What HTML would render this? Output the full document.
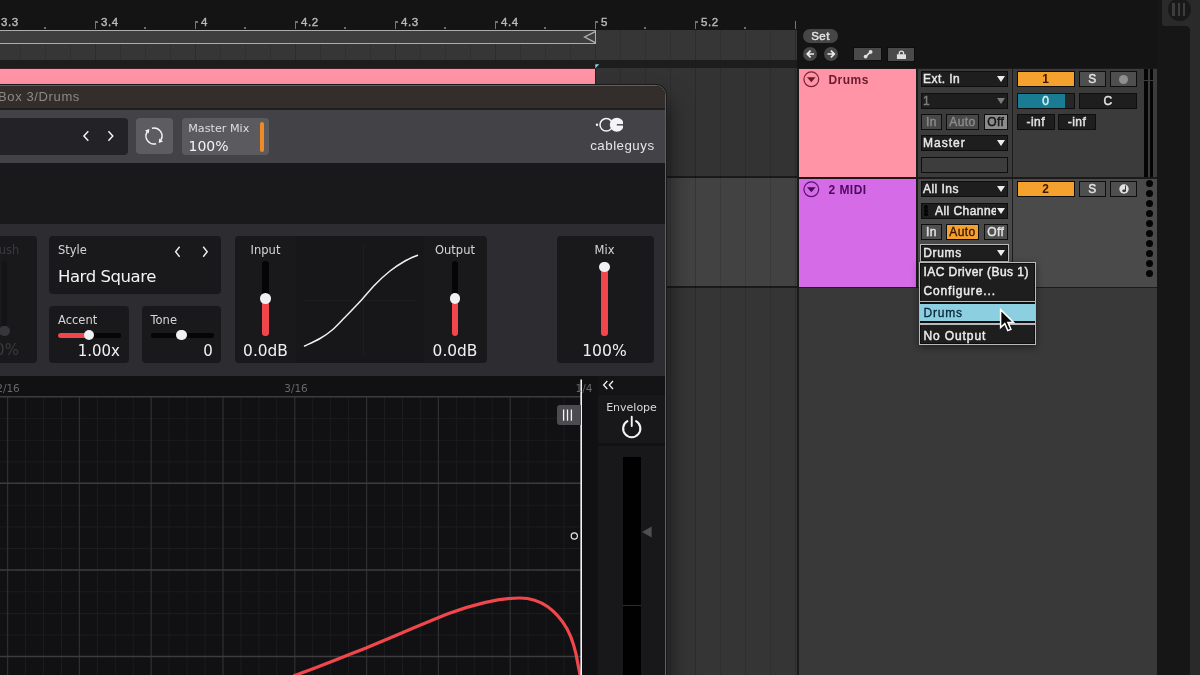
<!DOCTYPE html>
<html lang="en">
<head>
<meta charset="utf-8">
<title>Ableton Live – ShaperBox 3 routing</title>
<style>
*{box-sizing:border-box;margin:0;padding:0}
html,body{width:1200px;height:675px;overflow:hidden;background:#141414}
body{position:relative;font-family:"Liberation Sans",sans-serif;color:#e4e4e4}
#root{position:absolute;left:0;top:0;width:1200px;height:675px;overflow:hidden;will-change:transform}
.a{position:absolute}
.ab{font-family:"Liberation Sans",sans-serif;font-size:12px;-webkit-text-stroke:0.45px currentColor;white-space:nowrap;letter-spacing:.45px}
.pl{font-family:"DejaVu Sans","Liberation Sans",sans-serif;white-space:nowrap}
/* ---------- arrangement ---------- */
#grid{left:0;top:30px;width:797px;height:30px;background:#363636}
#lane1{left:0;top:68px;width:797px;height:108px;background:#333333}
#lane2{left:0;top:178px;width:797px;height:108px;background:#424242}
#lane3{left:0;top:288px;width:797px;height:387px;background:#353535}
.vl{position:absolute;top:0;bottom:0;width:1px;background:rgba(0,0,0,.11)}
.vb{background:rgba(0,0,0,.17)}
.rl{position:absolute;top:16.900px;font-size:11.5px;line-height:10px;color:#b9b9b9;-webkit-text-stroke:0.4px #b9b9b9;letter-spacing:.55px}
.tick{position:absolute;top:21.300px;width:1.400px;height:7.700px;background:#757575}
.tick:after{content:"";position:absolute;left:1px;top:0;width:2px;height:1.400px;background:#757575}
.nf:after{display:none}
.dot{position:absolute;top:27px;width:1.6px;height:1.6px;background:#8c8c8c;border-radius:1px}
#loop{left:-6px;top:30px;width:602px;height:14px;border:1.300px solid #adadad;background:#3e3e3e}
#clip{left:0;top:67.500px;width:594.500px;height:18.500px;background:#ff94a6;border-top:1px solid #4a1f27}
/* ---------- track area ---------- */
.thead{left:799px;width:117px;height:108px}
.io{left:918px;width:93.5px;height:108px}
.mx{left:1013px;width:144px;height:108px}
.p1{background:#3b3b3b}.p2{background:#4a4a4a}
.box{position:absolute;height:16.400px;background:#1e1e1e;border:1.300px solid #0e0e0e;line-height:14.600px;padding-left:1px;color:#e8e8e8;overflow:hidden}
.tri{position:absolute;right:2.5px;top:4px;width:0;height:0;border-left:4.3px solid transparent;border-right:4.3px solid transparent;border-top:6.5px solid #ececec}
.btn{position:absolute;height:16.400px;background:#4f4f4f;border:1.300px solid #0e0e0e;line-height:14.600px;text-align:center;color:#e2e2e2}
.fold{position:absolute;left:5px;top:4px;width:15.5px;height:15.5px;border-radius:50%;border:1.2px solid}
.fold:after{content:"";position:absolute;left:2.55px;top:4.3px;border-left:4px solid transparent;border-right:4px solid transparent;border-top:5.5px solid;border-top-color:inherit}
.tname{position:absolute;left:29.5px;top:3px;font-size:12px;font-weight:bold;line-height:16px;letter-spacing:.45px}
.or{background:#f5a12e;color:#3b1600;font-weight:bold;-webkit-text-stroke:0}
.pill{background:#464646;color:#e4e4e4;border-radius:8px;text-align:center}
.mbar{position:absolute;top:0;width:3.8px;background:#050505}
.mdot{position:absolute;left:1145.700px;width:7.400px;height:7.400px;border-radius:50%;background:#050505}
/* ---------- plugin ---------- */
#win{left:-20px;top:85px;width:685.5px;height:620px;border:1px solid #615e5d;border-radius:10px 10px 0 0;background:#111113;overflow:hidden;box-shadow:0 0 0 1px #1b1b1b,3px 16px 22px 1px rgba(0,0,0,.5)}
#win>*{position:absolute}
#win .w{position:absolute}
.pan{position:absolute;background:#19191c;border-radius:4px}
.lbl{position:absolute;font-size:11.5px;line-height:14px;color:#d6d6d8}
.val{position:absolute;font-size:15px;line-height:18px;color:#f0f0f2}
.trk{position:absolute;background:#050506;border-radius:3px}
.red{position:absolute;background:#f0464c;border-radius:3px}
.knob{position:absolute;width:10.600px;height:10.600px;margin:.2px;border-radius:50%;background:#f1f1f3}
</style>
</head>
<body>
<div id="root">
<!-- ================= ARRANGEMENT ================= -->
<div class="a" id="grid"></div>
<div class="a" style="left:0;top:60px;width:797px;height:8px;background:#1d1d1d"></div>
<div class="a" id="lane1"></div><div class="a" id="lane2"></div><div class="a" id="lane3"></div>
<div class="a" style="left:0;top:176px;width:797px;height:2px;background:#1a1a1a"></div>
<div class="a" style="left:0;top:286px;width:797px;height:2px;background:#1a1a1a"></div>
<div class="a" style="left:0;top:30px;width:797px;height:30px"><div class="vl" style="left:20px"></div><div class="vl" style="left:45px"></div><div class="vl" style="left:70px"></div><div class="vl vb" style="left:95px"></div><div class="vl" style="left:120px"></div><div class="vl" style="left:145px"></div><div class="vl" style="left:170px"></div><div class="vl vb" style="left:195px"></div><div class="vl" style="left:220px"></div><div class="vl" style="left:245px"></div><div class="vl" style="left:270px"></div><div class="vl vb" style="left:295px"></div><div class="vl" style="left:320px"></div><div class="vl" style="left:345px"></div><div class="vl" style="left:370px"></div><div class="vl vb" style="left:395px"></div><div class="vl" style="left:420px"></div><div class="vl" style="left:445px"></div><div class="vl" style="left:470px"></div><div class="vl vb" style="left:495px"></div><div class="vl" style="left:520px"></div><div class="vl" style="left:545px"></div><div class="vl" style="left:570px"></div><div class="vl vb" style="left:595px"></div><div class="vl" style="left:620px"></div><div class="vl" style="left:645px"></div><div class="vl" style="left:670px"></div><div class="vl vb" style="left:695px"></div><div class="vl" style="left:720px"></div><div class="vl" style="left:745px"></div><div class="vl" style="left:770px"></div><div class="vl vb" style="left:795px"></div></div><div class="a" style="left:0;top:68px;width:797px;height:607px"><div class="vl vb" style="left:595px"></div><div class="vl" style="left:620px"></div><div class="vl" style="left:645px"></div><div class="vl" style="left:670px"></div><div class="vl vb" style="left:695px"></div><div class="vl" style="left:720px"></div><div class="vl" style="left:745px"></div><div class="vl" style="left:770px"></div><div class="vl vb" style="left:795px"></div></div>
<div class="a" style="left:0;top:0;width:800px;height:30px"><div class="tick" style="left:-5.5px"></div><div class="rl" style="left:1px">3.3</div><div class="dot" style="left:44.3px"></div><div class="tick" style="left:94.5px"></div><div class="rl" style="left:101px">3.4</div><div class="dot" style="left:144.3px"></div><div class="tick" style="left:194.5px"></div><div class="rl" style="left:201px">4</div><div class="dot" style="left:244.3px"></div><div class="tick" style="left:294.5px"></div><div class="rl" style="left:301px">4.2</div><div class="dot" style="left:344.3px"></div><div class="tick" style="left:394.5px"></div><div class="rl" style="left:401px">4.3</div><div class="dot" style="left:444.3px"></div><div class="tick" style="left:494.5px"></div><div class="rl" style="left:501px">4.4</div><div class="dot" style="left:544.3px"></div><div class="tick" style="left:594.5px"></div><div class="rl" style="left:601px">5</div><div class="dot" style="left:644.3px"></div><div class="tick" style="left:694.5px"></div><div class="rl" style="left:701px">5.2</div><div class="dot" style="left:744.3px"></div><div class="tick nf" style="left:794.5px"></div></div>
<div class="a" id="loop"></div>
<svg class="a" style="left:580px;top:30px" width="18" height="15" viewBox="0 0 18 15"><path d="M15.3 1.6 L4.6 7 L15.3 12.6" fill="none" stroke="#b2b2b2" stroke-width="1.3"/></svg>
<div class="a" id="clip"></div>
<div class="a" style="left:595px;top:60px;width:1px;height:26px;background:#222"></div>
<svg class="a" style="left:594.500px;top:63.500px" width="6" height="6" viewBox="0 0 6 6"><path d="M0.300 0.300 L4.300 0.300 L0.300 4.300 Z" fill="#86d2dc"/></svg>

<!-- ================= TRACK AREA (right) ================= -->
<div class="a" style="left:797px;top:68px;width:2px;height:607px;background:#1a1a1a"></div>
<div class="a" style="left:799px;top:288px;width:358px;height:387px;background:#393939"></div>
<div class="a" style="left:799px;top:68px;width:358px;height:220px;background:#1b1b1b"></div>
<div class="a" style="left:1157px;top:0;width:33px;height:675px;background:#161616"></div>
<div class="a" style="left:1190px;top:0;width:10px;height:675px;background:#2a2a2a"></div>
<div class="a" style="left:1162px;top:0;width:38px;height:26px;background:#2a2a2a;border-bottom-left-radius:3px"></div>
<div class="a" style="left:1186px;top:26px;width:4px;height:4px;background:radial-gradient(circle at 0 100%,#161616 3.6px,#2a2a2a 4.2px)"></div>
<div class="a" style="left:1167.5px;top:-2.5px;width:23px;height:23px;border-radius:50%;background:#191919"></div>
<div class="a" style="left:1172.3px;top:2.5px;width:2.3px;height:13.5px;background:#3d3d3d"></div>
<div class="a" style="left:1177.7px;top:2.5px;width:2.3px;height:13.5px;background:#3d3d3d"></div>
<div class="a" style="left:1183.1px;top:2.5px;width:2.3px;height:13.5px;background:#3d3d3d"></div>

<!-- Set / locator buttons -->
<div class="a ab pill" style="left:803px;top:28.5px;width:35px;height:14px;line-height:14px;font-size:11.5px">Set</div>
<div class="a pill" style="left:803px;top:47px;width:14px;height:14px;border-radius:50%"></div>
<div class="a pill" style="left:824px;top:47px;width:14px;height:14px;border-radius:50%"></div>
<svg class="a" style="left:803px;top:47px" width="36" height="14" viewBox="0 0 36 14"><g fill="none" stroke="#ececec" stroke-width="1.7" stroke-linecap="butt"><path d="M11 7H4.2M7.6 3.6L4.2 7l3.4 3.4"/><path d="M24.5 7h6.8M27.9 3.6L31.3 7l-3.4 3.4"/></g></svg>
<div class="a btn" style="left:853px;top:46.700px;width:28.500px;height:14.500px;background:#4a4a4a"></div>
<div class="a btn" style="left:887px;top:47px;width:28px;height:14.5px;background:#4a4a4a"></div>
<svg class="a" style="left:853.5px;top:47px" width="62" height="15" viewBox="0 0 62 15"><g fill="#e0e0e0"><circle cx="11.6" cy="9.6" r="1.9"/><circle cx="16.6" cy="4.9" r="1.9"/><path d="M11 9l5-4.8 1.2 1.2-5 4.8z"/><rect x="42.900" y="7.300" width="9.100" height="4.700" rx=".5"/><path d="M44.700 7.600V6.300a2.750 2.750 0 0 1 5.500 0v1.300h-1.300V6.300a1.450 1.450 0 0 0-2.900 0v1.300z"/></g></svg>

<!-- Track 1 : Drums -->
<div class="a thead" style="top:68.500px;background:#ff94a6;color:#6a1a2e;height:108px"><svg class="a" style="left:4px;top:2.800px" width="17" height="17" viewBox="0 0 17 17"><circle cx="8.300" cy="8.300" r="7.400" fill="none" stroke="#7a2036" stroke-width="1.2"/><path d="M4 6.300H12.600L8.300 11.200z" fill="#6a1a2e"/></svg><div class="tname">Drums</div></div>
<div class="a io p1" style="top:68.5px;height:108px"></div>
<div class="a mx p1" style="top:68.5px;height:108px"></div>
<div class="a ab" style="left:0;top:0">
 <div class="box" style="left:921px;top:71px;width:87px">Ext. In<i class="tri"></i></div>
 <div class="box" style="left:921px;top:92.5px;width:87px;color:#7c7c7c">1<i class="tri" style="border-top-color:#7c7c7c"></i></div>
 <div class="btn" style="left:921px;top:114px;width:21px;color:#8a8a8a;background:#484848">In</div>
 <div class="btn" style="left:946px;top:114px;width:33px;color:#8a8a8a;background:#484848">Auto</div>
 <div class="btn" style="left:983.5px;top:114px;width:24.5px;color:#151515;background:#8b8b8b">Off</div>
 <div class="box" style="left:921px;top:135px;width:87px;letter-spacing:1px">Master<i class="tri"></i></div>
 <div class="box" style="left:921px;top:156.5px;width:87px;background:#3d3d3d"></div>
 <div class="btn or" style="left:1017px;top:71px;width:57.5px">1</div>
 <div class="btn" style="left:1079px;top:71px;width:27px">S</div>
 <div class="btn" style="left:1110.300px;top:71px;width:26.600px"><i style="position:absolute;left:8px;top:2.5px;width:9px;height:9px;border-radius:50%;background:#8f8f8f"></i></div>
 <div class="btn" style="left:1017px;top:92.5px;width:57.5px;background:linear-gradient(90deg,#1a7c93 0,#1a7c93 47.5px,#262626 47.5px);color:#d4f2f8">0</div>
 <div class="btn" style="left:1079px;top:92.5px;width:57.900px;background:#1e1e1e">C</div>
 <div class="btn" style="left:1017px;top:114px;width:37.5px;background:#1e1e1e">-inf</div>
 <div class="btn" style="left:1058px;top:114px;width:38px;background:#1e1e1e">-inf</div>
</div>
<div class="a" style="left:1144.4px;top:69px;width:10px;height:107.5px"><i class="mbar" style="left:0;height:10.5px"></i><i class="mbar" style="left:5.2px;height:10.5px"></i><i class="mbar" style="left:0;top:12px;height:95.5px"></i><i class="mbar" style="left:5.2px;top:12px;height:95.5px"></i></div>

<!-- Track 2 : 2 MIDI -->
<div class="a thead" style="top:178.5px;background:#d56be6;color:#4b0a5c;height:108px"><svg class="a" style="left:4px;top:2.800px" width="17" height="17" viewBox="0 0 17 17"><circle cx="8.300" cy="8.300" r="7.400" fill="none" stroke="#5a1270" stroke-width="1.2"/><path d="M4 6.300H12.600L8.300 11.200z" fill="#4b0a5c"/></svg><div class="tname">2 MIDI</div></div>
<div class="a io p2" style="top:178.5px;height:108px"></div>
<div class="a mx p2" style="top:178.5px;height:108px"></div>
<div class="a ab" style="left:0;top:110px">
 <div class="box" style="left:921px;top:71px;width:87px">All Ins<i class="tri"></i></div>
 <div class="box" style="left:921px;top:92.5px;width:87px;padding-left:0"><i style="position:absolute;left:2px;top:1.5px;width:4px;height:11px;background:radial-gradient(circle at 2px 2px,#050505 1.9px,transparent 2.2px) 0 0/4px 3.6px"></i><span style="position:absolute;left:0;top:0;width:73.600px;height:14px;overflow:hidden;padding-left:13px">All Channels</span><i class="tri"></i></div>
 <div class="btn" style="left:921px;top:114px;width:21px">In</div>
 <div class="btn or" style="left:946px;top:114px;width:33px;font-weight:normal;-webkit-text-stroke:0.35px #3b1600">Auto</div>
 <div class="btn" style="left:983.5px;top:114px;width:24.5px">Off</div>
 <div class="box" style="left:919.5px;top:134px;width:89.400px;height:18px;border:1.5px solid #b8b8b8;line-height:17.400px;letter-spacing:.7px;padding-left:2.700px;outline:1px solid #121212;outline-offset:-2.5px">Drums<i class="tri" style="top:4.5px;right:3px"></i></div>
 <div class="btn or" style="left:1017px;top:71px;width:57.5px">2</div>
 <div class="btn" style="left:1079px;top:71px;width:27px">S</div>
 <div class="btn" style="left:1110.300px;top:71px;width:26.600px"><svg style="position:absolute;left:7.300px;top:1.700px" width="10" height="10" viewBox="0 0 10 10"><circle cx="5" cy="5" r="4.700" fill="#e2e2e2"/><rect x="6" y="1.500" width="1" height="5.600" fill="#3a3a3a"/><ellipse cx="5.100" cy="6.800" rx="1.900" ry="1.400" fill="#3a3a3a"/></svg></div>
</div>
<i class="mdot" style="top:179.50px"></i><i class="mdot" style="top:189.56px"></i><i class="mdot" style="top:199.61px"></i><i class="mdot" style="top:209.66px"></i><i class="mdot" style="top:219.72px"></i><i class="mdot" style="top:229.78px"></i><i class="mdot" style="top:239.83px"></i><i class="mdot" style="top:249.88px"></i><i class="mdot" style="top:259.94px"></i><i class="mdot" style="top:270.00px"></i>

<!-- ================= PLUGIN WINDOW (ShaperBox 3) ================= -->
<div class="a pl" id="win">
 <!-- coordinates inside #win: x = page x + 19, y = page y - 86 -->
 <div style="left:0;top:0;width:100%;height:22px;background:#332e2c"></div>
 <div style="left:17px;top:3px;font-family:'Liberation Sans',sans-serif;font-size:13px;line-height:16px;color:#8d8986;letter-spacing:.62px">Box 3/Drums</div>
 <div style="left:0;top:22px;width:100%;height:2px;background:#1f1f20"></div>
 <div style="left:0;top:23.7px;width:100%;height:53.5px;background:#434347"></div>
 <!-- header controls -->
 <div style="left:0;top:31.5px;width:147px;height:37px;background:#232327;border-radius:4px"></div>
 <svg style="left:100px;top:43px" width="36" height="14" viewBox="0 0 36 14"><g fill="none" stroke="#f2f2f2" stroke-width="1.5"><path d="M7.3 2.3L2.9 7l4.4 4.7"/><path d="M27.4 2.3L31.8 7l-4.4 4.7"/></g></svg>
 <div style="left:154.800px;top:31.800px;width:37px;height:36.700px;background:#5c5c61;border-radius:4px"></div>
 <svg style="left:162.300px;top:39px" width="22" height="22" viewBox="0 0 22 22"><g fill="none" stroke="#f4f4f4" stroke-width="1.5"><path d="M8.930 3.270A8 8 0 0 1 17.930 15"/><path d="M13.070 18.730A8 8 0 0 1 4.070 7"/></g><path d="M15.700 17.900L20 16.400L16.200 13.400z M6.300 4.100L2 5.600L5.800 8.600z" fill="#f4f4f4"/></svg>
 <div style="left:200.5px;top:31.5px;width:87.5px;height:37px;background:#5b5b5f;border-radius:4px"></div>
 <div style="left:207.200px;top:35.500px;font-size:11.200px;line-height:14px;color:#dedee0">Master Mix</div>
 <div style="left:207.500px;top:50.500px;font-size:14px;line-height:18px;color:#f4f4f4">100%</div>
 <div style="left:279px;top:36px;width:4px;height:29.5px;background:#f08a24;border-radius:2px"></div>
 <!-- cableguys logo -->
 <svg style="left:612px;top:29px" width="30" height="20" viewBox="0 0 30 20"><circle cx="4" cy="9.8" r="1.25" fill="#f3f3f8"/><circle cx="13.3" cy="9.8" r="6.300" fill="none" stroke="#f3f3f8" stroke-width="1.500"/><circle cx="23.8" cy="9.8" r="7" fill="#f3f3f8"/><rect x="23.8" y="9.1" width="7.4" height="1.4" fill="#434347"/></svg>
 <div style="left:609.200px;top:51.700px;font-family:'Liberation Sans',sans-serif;font-size:13.300px;line-height:16px;color:#e6e6ea;letter-spacing:.5px">cableguys</div>
 <!-- dark band -->
 <div style="left:0;top:77.2px;width:100%;height:61px;background:#19191c"></div>
 <!-- control strip -->
 <div style="left:0;top:138px;width:100%;height:152px;background:#2d2d31"></div>
 <div class="pan" style="left:0;top:150.3px;width:55.8px;height:127px"></div>
 <div class="lbl" style="left:11px;top:156.7px;color:#3a3a3e">Push</div>
 <div class="trk" style="left:21px;top:175px;width:5px;height:74px;background:#141416"></div>
 <div class="knob" style="left:18.200px;top:239.500px;background:#37373b"></div>
 <div class="val" style="left:-5px;top:255.2px;color:#3a3a3e">100%</div>
 <!-- Style -->
 <div class="pan" style="left:67.900px;top:150.400px;width:172.600px;height:57.700px"></div>
 <div class="lbl" style="left:77px;top:156.7px">Style</div>
 <svg style="left:189.500px;top:159.300px" width="40" height="14" viewBox="0 0 40 14"><g fill="none" stroke="#f2f2f2" stroke-width="1.4"><path d="M8.6 1.8L4.6 6.8l4 5"/><path d="M31.6 1.8l4 5-4 5" transform="translate(.6 0)"/></g></svg>
 <div style="left:77px;top:179.800px;font-size:16.500px;line-height:22px;letter-spacing:-.45px;color:#f3f3f5">Hard Square</div>
 <!-- Accent -->
 <div class="pan" style="left:67.900px;top:220.400px;width:80.100px;height:57px"></div>
 <div class="lbl" style="left:77px;top:226.7px">Accent</div>
 <div class="trk" style="left:77px;top:246.5px;width:63px;height:5px"></div>
 <div class="red" style="left:77px;top:246.5px;width:30px;height:5px"></div>
 <div class="knob" style="left:102.5px;top:243.5px"></div>
 <div class="val" style="left:68.5px;top:255.7px;width:70.5px;text-align:right">1.00x</div>
 <!-- Tone -->
 <div class="pan" style="left:160.8px;top:220.3px;width:79.7px;height:57px"></div>
 <div class="lbl" style="left:169.5px;top:226.7px">Tone</div>
 <div class="trk" style="left:169.5px;top:246.5px;width:63px;height:5px"></div>
 <div class="knob" style="left:195px;top:243.5px"></div>
 <div class="val" style="left:160.8px;top:255.7px;width:71px;text-align:right">0</div>
 <!-- Input / curve / Output -->
 <div class="pan" style="left:253.5px;top:150.3px;width:252px;height:127px"></div>
 <div style="left:315px;top:150.3px;width:128px;height:127px;background:#171719"></div>
 <div style="left:381.500px;top:158px;width:1px;height:112px;background:#1e1e21"></div>
 <div style="left:322px;top:213.5px;width:114px;height:1px;background:#1e1e21"></div>
 <svg style="left:315px;top:150.3px" width="128" height="127" viewBox="0 0 128 127"><path d="M8.50 110.00C11.08 108.75 19.33 105.22 24.00 102.50C28.67 99.78 32.33 97.25 36.50 93.70C40.67 90.15 44.21 86.12 49.00 81.20C53.79 76.28 60.25 69.62 65.25 64.20C70.25 58.78 74.21 53.57 79.00 48.70C83.79 43.83 89.00 38.95 94.00 35.00C99.00 31.05 104.42 27.63 109.00 25.00C113.58 22.37 119.42 20.17 121.50 19.20" fill="none" stroke="#f0f0f2" stroke-width="1.5" stroke-linecap="round"/></svg>
 <div class="lbl" style="left:254.500px;top:156.7px;width:60px;text-align:center">Input</div>
 <div class="trk" style="left:281.400px;top:175px;width:6.200px;height:75px"></div>
 <div class="red" style="left:281.400px;top:213px;width:6.200px;height:37px"></div>
 <div class="knob" style="left:279px;top:207.3px"></div>
 <div class="val" style="left:254.500px;top:255.7px;width:60px;text-align:center;font-size:15.400px">0.0dB</div>
 <div class="lbl" style="left:439px;top:156.7px;width:70px;text-align:center">Output</div>
 <div class="trk" style="left:470.900px;top:175px;width:6.200px;height:75px"></div>
 <div class="red" style="left:470.900px;top:213px;width:6.200px;height:37px"></div>
 <div class="knob" style="left:468.5px;top:207.3px"></div>
 <div class="val" style="left:444px;top:255.7px;width:60px;text-align:center;font-size:15.400px">0.0dB</div>
 <!-- Mix -->
 <div class="pan" style="left:575.800px;top:150.3px;width:96.800px;height:127px"></div>
 <div class="lbl" style="left:593.500px;top:156.7px;width:60px;text-align:center">Mix</div>
 <div class="red" style="left:620px;top:181px;width:7px;height:69px"></div>
 <div class="knob" style="left:618px;top:175.5px"></div>
 <div class="val" style="left:593.500px;top:255.7px;width:60px;text-align:center;font-size:15.600px">100%</div>
 <svg style="left:19px;top:0" width="600" height="589" viewBox="0 86 600 589">
 <rect x="0" y="376" width="600" height="300" fill="#111113"/>
 <path d="M25.5 397V675M43.5 397V675M61.5 397V675M97.4 397V675M115.3 397V675M133.2 397V675M169.1 397V675M187.1 397V675M205.0 397V675M240.9 397V675M258.9 397V675M276.8 397V675M312.7 397V675M330.7 397V675M348.6 397V675M384.5 397V675M402.5 397V675M420.4 397V675M456.3 397V675M474.3 397V675M492.2 397V675M528.1 397V675M546.1 397V675M564.0 397V675M0 418.6H581M0 440.3H581M0 461.9H581M0 505.2H581M0 526.9H581M0 548.5H581M0 591.8H581M0 613.5H581M0 635.1H581" stroke="#1c1c1e" stroke-width="1" fill="none"/>
 <path d="M7.6 397V675M79.4 397V675M151.2 397V675M223.0 397V675M294.8 397V675M366.6 397V675M438.4 397V675M510.2 397V675" stroke="#2e2e30" stroke-width="1.3" fill="none"/>
 <path d="M0 396.7H581M0 483.3H581M0 569.9H581M0 656.5H581" stroke="#3c3c3e" stroke-width="1.5" fill="none"/>
 <path d="M294.5 675.5C316 668 340 658 366 648C394 636.500 420 625 448.700 613.600C462 608.500 472 605.500 484.500 602.600C496 600 508 598 520 598C532 598 541 602 547.800 606.800C555 612 562 620 567 628.800C572 638 576 652 578 664.500C578.800 669 579.600 672 580.200 676" stroke="#f0474d" stroke-width="3.2" fill="none" stroke-linecap="round"/>
 <path d="M581.200 379.5V676" stroke="#f4f4f4" stroke-width="1.6"/>
 <path d="M560 405H581V425H560a3 3 0 0 1-3-3V408a3 3 0 0 1 3-3z" fill="#4c4c50"/>
 <path d="M563.600 409.500V420.800M567.500 409.500V420.800M571.400 409.500V420.800" stroke="#f4f4f4" stroke-width="1.3"/>
 <circle cx="574.300" cy="536" r="3.1" fill="#111113" stroke="#e8e8e8" stroke-width="1.2"/>
 </svg>
 <div style="left:12px;top:296.300px;width:30px;text-align:center;font-size:10.5px;line-height:12px;color:#67676b">2/16</div>
 <div style="left:300px;top:296.300px;width:30px;text-align:center;font-size:10.5px;line-height:12px;color:#67676b">3/16</div>
 <div style="left:588px;top:296.300px;width:30px;text-align:center;font-size:10.5px;line-height:12px;color:#67676b">1/4</div>
 <div style="left:617px;top:290px;width:66.5px;height:18px;background:#141416"></div>
 <svg style="left:621px;top:294px" width="14" height="10" viewBox="0 0 14 10"><path d="M5.300 1L1.600 5l3.700 4M11 1L7.300 5l3.700 4" fill="none" stroke="#f0f0f0" stroke-width="1.3"/></svg>
 <div style="left:617px;top:308.500px;width:66.5px;height:48.5px;background:#18181a"></div>
 <div style="left:617px;top:314.5px;width:67px;text-align:center;font-size:11px;line-height:13px;color:#d8d8da">Envelope</div>
 <svg style="left:639px;top:329px" width="24" height="24" viewBox="0 0 24 24"><path d="M7.400 6.200A8.600 8.600 0 1 0 16.100 6.200" fill="none" stroke="#f4f4f4" stroke-width="2.1" stroke-linecap="round"/><path d="M11.750 1.800V11" stroke="#f4f4f4" stroke-width="1.9" stroke-linecap="round"/></svg>
 <div style="left:617px;top:360px;width:66.5px;height:240px;background:#18181a"></div>
 <div style="left:642px;top:371.400px;width:17.500px;height:230px;background:#010101"></div>
 <div style="left:642px;top:519px;width:17.500px;height:1px;background:#2c2c2e"></div>
 <svg style="left:660px;top:439px" width="12" height="14" viewBox="0 0 12 14"><path d="M1 7L10.600 1.500V12.500z" fill="#4f4f52"/></svg>
</div>

<!-- ================= OUTPUT CHOOSER MENU ================= -->
<div class="a ab" style="left:919.4px;top:262.3px;width:116.3px;height:82.4px;background:#1e1e1e;border:1.4px solid #b9b9b9;box-shadow:inset 0 0 0 1px #0f0f0f,0 2px 7px rgba(0,0,0,.45);color:#ececec">
 <div class="a" style="left:3px;top:0.7px;line-height:16px">IAC Driver (Bus 1)</div>
 <div class="a" style="left:3px;top:19.700px;line-height:16px;letter-spacing:.87px">Configure...</div>
 <div class="a" style="left:0;top:37.6px;width:100%;height:1.3px;background:#b9b9b9"></div>
 <div class="a" style="left:0;top:38.9px;width:100%;height:1.6px;background:#0f0f0f"></div>
 <div class="a" style="left:0;top:40.800px;width:100%;height:17.300px;background:#8ccfe1"></div>
 <div class="a" style="left:3px;top:42px;line-height:16px;letter-spacing:.85px;color:#0a2438;-webkit-text-stroke:0.3px #0a2438">Drums</div>
 <div class="a" style="left:0;top:58.100px;width:100%;height:2px;background:#0f0f0f"></div>
 <div class="a" style="left:0;top:60px;width:100%;height:1.3px;background:#b9b9b9"></div>
 <div class="a" style="left:3px;top:64.600px;line-height:16px;letter-spacing:.9px">No Output</div>
</div>
<!-- mouse pointer -->
<svg class="a" style="left:998px;top:307px" width="20" height="28" viewBox="0 0 20 28"><path d="M2.600 2.600V20.600L6.800 16.600L9.800 23.600L12.900 22.300L9.900 15.400H15.600z" fill="#0a0a0a" stroke="#ffffff" stroke-width="1.5" stroke-linejoin="miter"/></svg>

</div>
</body>
</html>
